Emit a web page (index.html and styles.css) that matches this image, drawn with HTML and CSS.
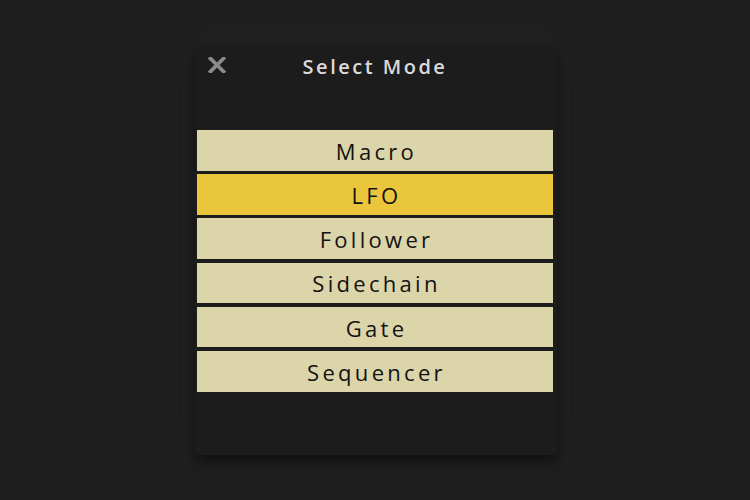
FILE: index.html
```html
<!DOCTYPE html>
<html>
<head>
<meta charset="utf-8">
<link rel="stylesheet" href="styles.css">
</head>
<body>
<div class="stage">
  <div class="dialog">
    <div class="header">
      <svg class="close" viewBox="0 0 18 16" width="18" height="16">
        <path d="M2.5 1.5 L15.5 14.5 M15.5 1.5 L2.5 14.5" stroke="#8a8a8a" stroke-width="3.8" stroke-linecap="square" fill="none"/>
      </svg>
      <div class="title">Select Mode</div>
    </div>
    <div class="list">
      <div class="item">Macro</div>
      <div class="item selected">LFO</div>
      <div class="item">Follower</div>
      <div class="item">Sidechain</div>
      <div class="item">Gate</div>
      <div class="item">Sequencer</div>
    </div>
  </div>
</div>
</body>
</html>
```
FILE: styles.css
```css
html, body {
  margin: 0;
  padding: 0;
  background: #1f1f1f;
}
.stage {
  width: 750px;
  height: 500px;
  display: flex;
  justify-content: center;
  align-items: flex-start;
  padding-top: 47px;
  box-sizing: border-box;
  padding-left: 2px;
}
.dialog {
  width: 362px;
  height: 408px;
  background: #1c1c1c;
  border-radius: 5px;
  box-shadow: 0 6px 14px rgba(0,0,0,0.6), 0 0 34px rgba(70,70,70,0.22);
  padding: 0 4px 0 2px;
  box-sizing: border-box;
  display: flex;
  flex-direction: column;
  font-family: "Open Sans", "DejaVu Sans", sans-serif;
}
.header {
  position: relative;
  height: 83px;
  display: flex;
  justify-content: center;
  align-items: flex-start;
}
.close {
  position: absolute;
  left: 11px;
  top: 10px;
}
.title {
  margin-top: 6px;
  color: #dadada;
  font-weight: 600;
  font-size: 20px;
  letter-spacing: 2.5px;
  line-height: 28px;
}
.list {
  display: flex;
  flex-direction: column;
  gap: 3.6px;
}
.item {
  height: 40.6px;
  background: #dcd5aa;
  color: #121212;
  display: flex;
  align-items: center;
  justify-content: center;
  font-size: 22px;
  font-weight: 500;
  letter-spacing: 3.3px;
  padding-left: 3px;
  padding-top: 1px;
  box-sizing: border-box;
}
.item.selected {
  background: #e9c63c;
}
```
